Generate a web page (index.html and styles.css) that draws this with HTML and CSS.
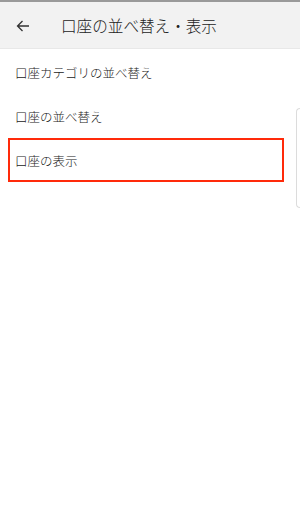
FILE: index.html
```html
<!DOCTYPE html>
<html lang="ja">
<head>
<meta charset="utf-8">
<link rel="stylesheet" href="styles.css">
</head>
<body>
<div class="statusbar"></div>
<header class="header">
  <span class="back">
    <svg width="14" height="12" viewBox="0 0 14 12"><path d="M13 6H1.5M6.5 1L1.5 6l5 5" fill="none" stroke="#333" stroke-width="1.3"/></svg>
  </span>
  <h1 class="title">口座の並べ替え・表示</h1>
</header>
<main class="list">
  <div class="item">口座カテゴリの並べ替え</div>
  <div class="item">口座の並べ替え</div>
  <div class="item item-hl">口座の表示</div>
</main>
<div class="side-tab"></div>
</body>
</html>
```
FILE: styles.css
```css
html, body {
  margin: 0;
  padding: 0;
  background: #fff;
  width: 300px;
  height: 514px;
  overflow: hidden;
  font-family: "Noto Sans CJK JP", "Noto Sans", sans-serif;
  font-weight: 300;
  color: #222;
  position: relative;
}
.statusbar {
  height: 2px;
  background: #9a9a9a;
}
.header {
  height: 46px;
  background: #f2f2f2;
  border-bottom: 1px solid #e8e8e8;
  display: flex;
  align-items: center;
}
.back {
  width: 61px;
  display: flex;
  padding-left: 16px;
  box-sizing: border-box;
  padding-top: 1px;
}
.back svg { display: block; }
.title {
  margin: 0;
  font-size: 15.6px;
  font-weight: 300;
  color: #222;
  letter-spacing: 0;
}
.list {
  padding-top: 1px;
}
.item {
  height: 44px;
  display: flex;
  align-items: center;
  padding-left: 15px;
  font-size: 12.5px;
  color: #222;
}
.item-hl {
  margin-left: 8px;
  width: 276px;
  height: 44px;
  box-sizing: border-box;
  border: 2px solid #ff2a0a;
  padding-left: 5px;
}
.side-tab {
  position: absolute;
  left: 296px;
  top: 108px;
  width: 4px;
  height: 100px;
  border: 1px solid #dcdcdc;
  border-right: none;
  border-radius: 5px 0 0 5px;
  box-sizing: border-box;
}
```
